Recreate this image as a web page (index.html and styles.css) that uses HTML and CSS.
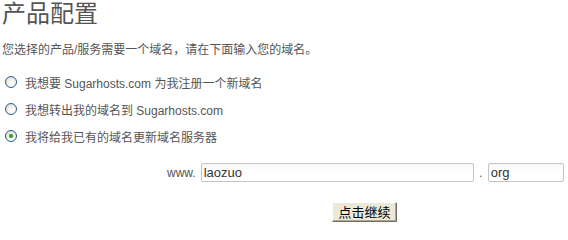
FILE: index.html
```html
<!DOCTYPE html>
<html lang="zh-CN">
<head>
<meta charset="utf-8">
<title>产品配置</title>
<link rel="stylesheet" href="styles.css">
</head>
<body>
<div class="page">
  <h1 class="title">产品配置</h1>
  <p class="intro">您选择的产品/服务需要一个域名，请在下面输入您的域名。</p>
  <div class="options">
    <label class="option"><input type="radio" name="domain" class="radio"><span>我想要 Sugarhosts.com 为我注册一个新域名</span></label>
    <label class="option"><input type="radio" name="domain" class="radio"><span>我想转出我的域名到 Sugarhosts.com</span></label>
    <label class="option"><input type="radio" name="domain" class="radio" checked><span>我将给我已有的域名更新域名服务器</span></label>
  </div>
  <div class="domain-row">
    <span class="www">www.</span>
    <input type="text" class="field field-name" value="laozuo">
    <span class="dot">.</span>
    <input type="text" class="field field-tld" value="org">
  </div>
  <div class="actions">
    <button type="button" class="btn">点击继续</button>
  </div>
</div>
</body>
</html>
```

FILE: styles.css
```css
html, body {
  margin: 0;
  padding: 0;
  background: #ffffff;
}

.page {
  padding: 0 2px;
  font-family: "Liberation Sans", "Noto Sans CJK SC", sans-serif;
  font-size: 12px;
  color: #555555;
}

.title {
  margin: 0;
  padding-top: 1px;
  font-size: 24px;
  line-height: 26px;
  font-weight: normal;
  color: #555555;
}

.intro {
  margin: 15px 0 0 0;
  line-height: 16px;
}

.options {
  margin-top: 10px;
  display: flex;
  flex-direction: column;
}

.option {
  height: 27px;
  display: flex;
  align-items: center;
  gap: 8px;
  padding-left: 3px;
}

.option span {
  position: relative;
  top: 1px;
}

.radio {
  appearance: none;
  -webkit-appearance: none;
  margin: 0;
  width: 12px;
  height: 12px;
  border-radius: 50%;
  border: 1px solid #2a5a8c;
  background: radial-gradient(circle at 65% 70%, #ffffff 0%, #f4f4f0 40%, #d6d4cc 100%);
  box-sizing: border-box;
  position: relative;
  flex: none;
}

.radio:checked::after {
  content: "";
  position: absolute;
  left: 3px;
  top: 3px;
  width: 4px;
  height: 4px;
  border-radius: 50%;
  background: #26a326;
  box-shadow: 0 0 1px #6bd66b;
}

.domain-row {
  margin-top: 14px;
  display: flex;
  align-items: center;
  padding-left: 165px;
  height: 19px;
}

.www {
  color: #555555;
  margin-right: 5px;
}

.dot {
  width: 14px;
  text-align: center;
  color: #555555;
}

.field {
  height: 19px;
  box-sizing: border-box;
  border: 1px solid #c4c4c4;
  border-radius: 2px;
  background: linear-gradient(#f7f7f7, #ffffff 40%);
  padding: 0 2px;
  margin: 0;
  font-family: "Liberation Sans", sans-serif;
  font-size: 13px;
  color: #333333;
  outline: none;
}

.field-name {
  width: 273px;
}

.field-tld {
  width: 76px;
}

.actions {
  margin-top: 20px;
  padding-left: 330px;
}

.btn {
  width: 65px;
  height: 20px;
  margin: 0;
  padding: 0;
  box-sizing: border-box;
  background: #ece9d8;
  border: 1px solid;
  border-color: #ffffff #716f64 #716f64 #ffffff;
  box-shadow: inset -1px -1px 0 #aca899;
  font-family: "Noto Sans CJK SC", sans-serif;
  font-size: 13px;
  line-height: 18px;
  color: #000000;
}
```
